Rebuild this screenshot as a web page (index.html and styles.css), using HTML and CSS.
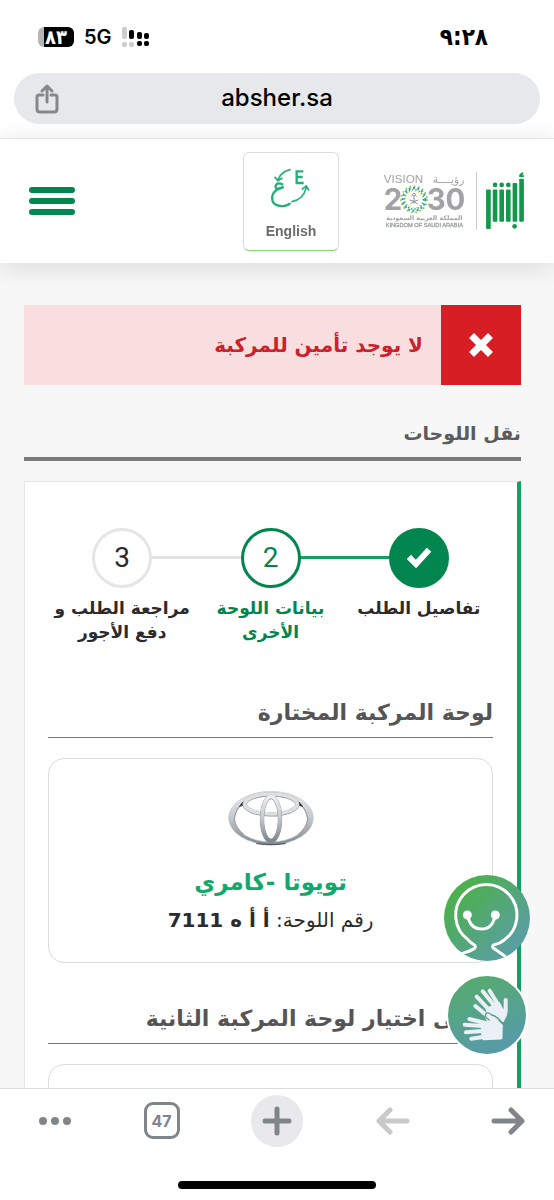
FILE: index.html
```
<!DOCTYPE html>
<html lang="ar" dir="rtl">
  <head>
    <meta charset="utf-8">
    <meta name="viewport" content="width=device-width, initial-scale=1">
    <title>نقل اللوحات</title>
    <link rel="stylesheet" href="styles.css">
  </head>
  <body>
    <div class="status">
      <span class="time">٩:٢٨</span>
      <div class="status-icons">
        <svg class="signal" width="28" height="20" viewBox="0 0 28 20">
          <g fill="#ccc">
            <rect x="0" y="0" width="5" height="12" rx="2"/>
            <rect x="0" y="15" width="5" height="5" rx="2"/>
            <rect x="7" y="15" width="5" height="5" rx="2"/>
          </g>
          <rect x="7" y="3" width="5" height="9" rx="2"/>
          <rect x="15" y="5" width="5" height="7" rx="2"/>
          <rect x="22" y="6" width="5" height="6" rx="2"/>
          <rect x="15" y="14" width="5" height="5" rx="2"/>
          <rect x="22" y="14" width="5" height="5" rx="2"/>
        </svg>
        <span class="network">5G</span>
        <span class="battery">٨٣</span>
      </div>
    </div>

    <div class="address">
      <span class="address-text">absher.sa</span>
      <button class="share" aria-label="مشاركة">
        <svg width="24" height="30" viewBox="0 0 24 30" fill="none" stroke="#85888b" stroke-width="3" stroke-linecap="round" stroke-linejoin="round">
          <path d="M8 11H4q-2 0-2 2v12q0 3 3 3h14q3 0 3-3V13q0-2-2-2h-4M12 18V3M7 7l5-5 5 5"/>
        </svg>
      </button>
    </div>

    <header class="header">
      <svg class="absher" width="40" height="58" viewBox="345 35 120 175" fill="#12984a">
        <rect x="348" y="88" width="14" height="119" rx="3"/>
        <rect x="368" y="88" width="14" height="97" rx="3"/>
        <rect x="388" y="88" width="14" height="97" rx="3"/>
        <rect x="408" y="88" width="14" height="97" rx="3"/>
        <rect x="428" y="68" width="14" height="117" rx="3"/>
        <rect x="448" y="55" width="14" height="130" rx="3"/>
        <circle cx="375" cy="74" r="7"/>
        <circle cx="395" cy="74" r="7"/>
        <circle cx="415" cy="74" r="7"/>
        <circle cx="434" cy="199" r="7"/>
        <path d="M448 50v-7q5-6 12-7v6l-4 3h6v5z"/>
      </svg>
      <svg class="vision" width="84" height="58" viewBox="40 40 252 174" direction="ltr" fill="#a1a3a6">
        <text class="v-word" x="42" y="74">VISION</text>
        <text class="v-word-ar" x="284" y="72">رؤيــــة</text>
        <text class="v-num" x="42" y="153">2</text>
        <text class="v-num" x="171" y="153">30</text>
        <g fill="none">
          <circle cx="133" cy="122" r="39" stroke="#8cc63f" stroke-width="5" stroke-dasharray="5 8"/>
          <circle cx="133" cy="122" r="34" stroke="#1aa6b7" stroke-width="6" stroke-dasharray="6 7"/>
          <circle cx="133" cy="122" r="29" stroke="#1f9d55" stroke-width="4" stroke-dasharray="4 6"/>
          <circle cx="133" cy="122" r="25" stroke="#d9d94a" stroke-width="4" stroke-dasharray="3 7"/>
          <path d="M133 134v-20M125 113q4-7 8 0 4-7 8 0M127 108q6-8 12 0M120 124q12 2 24 12M146 124q-12 2-24 12" stroke="#8b9095" stroke-width="3"/>
        </g>
        <text class="v-small" x="164" y="184">المملكة العربية السعودية</text>
        <text class="v-small-en" x="164" y="205">KINGDOM OF SAUDI ARABIA</text>
      </svg>
      <button class="lang" lang="en">
        <svg width="42" height="42" viewBox="0 0 126 126" fill="none" stroke="#25b07a" stroke-width="5" stroke-linecap="round">
          <path d="M60 8Q34 14 25 36M15 31l9 10 12-7"/>
          <path d="M66 104q34-8 42-40M97 66l12-9 7 12"/>
          <path d="M37 52q-16-7-20 4-2 10 10 10l14-6q-29 6-34 27-4 27 24 30 19 2 28-7" stroke-width="7"/>
          <path d="M100 13H80v35h21M80 30h18" stroke-width="7" stroke-linecap="butt"/>
        </svg>
        English
      </button>
      <button class="burger" aria-label="القائمة"><i></i><i></i><i></i></button>
    </header>

    <main class="content">
      <div class="alert" role="alert">
        <div class="alert-icon">
          <svg width="24" height="24" viewBox="0 0 24 24" stroke="#fff" stroke-width="7" stroke-linecap="square"><path d="M5 5l14 14M19 5L5 19"/></svg>
        </div>
        <p class="alert-text">لا يوجد تأمين للمركبة</p>
      </div>

      <h1 class="title">نقل اللوحات</h1>

      <section class="card">
        <ol class="steps">
          <li class="step done">
            <span class="dot"><svg width="26" height="22" viewBox="0 0 26 22" fill="none" stroke="#fff" stroke-width="6" stroke-linecap="square"><path d="M5 12l5 5L21 5"/></svg></span>
            <span class="step-label">تفاصيل الطلب</span>
          </li>
          <li class="step current">
            <span class="dot">2</span>
            <span class="step-label">بيانات اللوحة الأخرى</span>
          </li>
          <li class="step">
            <span class="dot">3</span>
            <span class="step-label">مراجعة الطلب و دفع الأجور</span>
          </li>
        </ol>

        <h2 class="subtitle">لوحة المركبة المختارة</h2>
        <div class="vehicle">
          <svg width="86" height="56" viewBox="0 0 258 168" fill="none">
            <defs>
              <linearGradient id="metal" x1="0" y1="0" x2="0" y2="1">
                <stop offset="0" stop-color="#eceef0"/>
                <stop offset=".5" stop-color="#c3c8cc"/>
                <stop offset="1" stop-color="#80868c"/>
              </linearGradient>
            </defs>
            <path fill="url(#metal)" fill-rule="evenodd" stroke="#c0c4c8" stroke-width="2" d="M2 84a127 80 0 1 0 254 0 127 80 0 1 0-254 0zm17 3a110 69 0 1 1 220 0 110 69 0 1 1-220 0z"/>
            <path d="M41 42Q22 60 19 88q4 26 28 45M217 42q19 18 22 46-4 26-28 45" stroke="#8b9197" stroke-width="3"/>
            <path d="M35 49l9-12v9zM223 49l-9-12v9z" fill="#303538" stroke="#303538" stroke-width="3"/>
            <ellipse cx="129" cy="43" rx="79" ry="30" stroke="#8d9399" stroke-width="13"/>
            <ellipse cx="129" cy="42" rx="79" ry="30" stroke="#dde0e3" stroke-width="11"/>
            <ellipse cx="129" cy="87" rx="27" ry="66" stroke="#8c9298" stroke-width="13"/>
            <ellipse cx="129" cy="86" rx="27" ry="66" stroke="url(#metal)" stroke-width="11"/>
            <path d="M85 160q44 8 88 0" stroke="#555b60" stroke-width="4"/>
          </svg>
          <strong class="vehicle-name">تويوتا -كامري</strong>
          <p class="plate">رقم اللوحة: <b>أ أ ه 7111</b></p>
        </div>

        <h2 class="subtitle">يرجى اختيار لوحة المركبة الثانية</h2>
        <div class="vehicle"></div>
      </section>
    </main>

    <div class="floating">
      <button class="float-btn assistant" aria-label="المساعد">
        <svg width="86" height="86" viewBox="0 0 258 258" fill="none" stroke="#fff" stroke-width="9" stroke-linecap="round" stroke-linejoin="round">
          <path d="M55 235q24-6 37-15 5-5-2-11-10-6-18-15A92 92 0 1 1 182 194q-14 12-32 15-8 5-2 10l34 24"/>
          <path d="M71 122q8 40 41 40 34 0 41-40"/>
          <circle cx="70" cy="120" r="9" fill="#fff"/>
          <circle cx="154" cy="120" r="9" fill="#fff"/>
        </svg>
      </button>
      <button class="float-btn sign" aria-label="لغة الإشارة">
        <svg width="78" height="78" viewBox="0 0 234 234" fill="none" stroke="#ebf0f7" stroke-width="12" stroke-linecap="round" stroke-linejoin="round">
          <path d="M86 62l34 36M104 46l34 42M125 44l28 46M82 90l34 28M173 72v34"/>
          <path d="M118 100l34-18 15 28 6-14v20l-9 18-24-10-20-14z" fill="#ebf0f7" stroke-width="9"/>
          <path d="M64 129l48 12M50 146l54 4M54 169l50-4M70 188l40-6"/>
          <path d="M106 142l18-2-8-16q2-8 10-4l34 28-1 38-52 2-5-24z" fill="#ebf0f7" stroke-width="9"/>
          <path d="M124 132q-16-10-11-18 6-8 18 3 18 4 33 26" stroke="#539f87" stroke-width="4"/>
        </svg>
      </button>
    </div>

    <nav class="toolbar">
      <button class="tool" aria-label="التالي">
        <svg width="34" height="30" viewBox="0 0 34 30"><path d="M3 15h27M20 4l11 11-11 11"/></svg>
      </button>
      <button class="tool" aria-label="السابق" disabled>
        <svg width="34" height="30" viewBox="0 0 34 30"><path d="M31 15H4M14 4L3 15l11 11"/></svg>
      </button>
      <button class="tool new-tab" aria-label="علامة تبويب جديدة">
        <svg width="30" height="30" viewBox="0 0 30 30"><path d="M15 3v24M3 15h24"/></svg>
      </button>
      <button class="tool" aria-label="علامات التبويب"><span class="tab-count">47</span></button>
      <button class="tool more" aria-label="المزيد">
        <svg width="34" height="30" viewBox="0 0 34 30"><path d="M5 15h0M17 15h0M29 15h0" stroke-width="8"/></svg>
      </button>
    </nav>
    <div class="home-bar"></div>
  </body>
</html>
```

FILE: styles.css
```
* {
  box-sizing: border-box;
}

html, body {
  margin: 0;
  height: 100%;
}

body {
  display: flex;
  flex-direction: column;
  position: relative;
  overflow: hidden;
  background: #fff;
  color: #2b2b2d;
  font-family: 'DejaVu Sans', sans-serif;
}

button {
  border: none;
  background: none;
  padding: 0;
  margin: 0;
  cursor: pointer;
}

svg {
  display: block;
}

h1, h2, p, ol {
  margin: 0;
  padding: 0;
}

/* phone status bar */
.status {
  display: flex;
  align-items: center;
  justify-content: space-between;
  flex: none;
  height: 73px;
  padding: 0 66px 0 38px;
  color: #000;
}

.time {
  font: bold 24px/32px 'DejaVu Sans Condensed', 'DejaVu Sans', sans-serif;
}

.status-icons {
  display: flex;
  align-items: center;
  gap: 10px;
}

.signal {
  direction: ltr;
}

.network {
  font: 600 20px/24px Inter, sans-serif;
}

.battery {
  width: 36px;
  height: 20px;
  border-radius: 6px;
  background: linear-gradient(to right, #b5b5b5 6px, #000 6px);
  color: #fff;
  font: bold 20px/20px 'DejaVu Sans Condensed', 'DejaVu Sans', sans-serif;
  text-align: center;
}

.address {
  display: flex;
  align-items: center;
  position: relative;
  flex: none;
  height: 51px;
  margin: 0 14px 14px;
  border-radius: 26px;
  background: #e6e8eb;
}

.address-text {
  flex: 1;
  padding-bottom: 2px;
  color: #000;
  font: 500 24px/32px Inter, sans-serif;
  text-align: center;
}

.share {
  position: absolute;
  left: 21px;
}

/* site header */
.header {
  display: flex;
  align-items: center;
  flex: none;
  height: 125px;
  padding: 0 29px;
  border-top: 1px solid #e4e4e6;
  background: #fff;
  box-shadow: 0 4px 24px rgba(0,0,0,0.12);
  z-index: 1;
}

.absher {
  margin-left: 8px;
}

.vision {
  box-sizing: content-box;
  margin-left: 44px;
  padding-right: 9px;
  border-right: 1px solid #c9cacc;
}

.v-word {
  font: 35px 'Liberation Sans', sans-serif;
}

.v-word-ar {
  font: 32px 'DejaVu Sans', sans-serif;
  text-anchor: end;
}

.v-num {
  font: bold 88px Inter, sans-serif;
}

.v-small {
  font: bold 19px 'DejaVu Sans', sans-serif;
  text-anchor: middle;
}

.v-small-en {
  font: 17px 'Liberation Sans', sans-serif;
  stroke: #a1a3a6;
  text-anchor: middle;
}

.lang {
  display: flex;
  flex-direction: column;
  align-items: center;
  justify-content: space-between;
  width: 96px;
  height: 99px;
  padding: 14px 0 9px;
  border: 1px solid #dcdcdc;
  border-bottom: 1px solid #7fdc6c;
  border-radius: 6px;
  color: #6a6b6e;
  font: bold 14px/20px 'Liberation Sans', sans-serif;
}

.burger {
  display: flex;
  flex-direction: column;
  gap: 5px;
  width: 46px;
  margin-right: auto;
}

.burger i {
  height: 6px;
  border-radius: 3px;
  background: #00864e;
}

/* page */
.content {
  flex: 1;
  min-height: 0;
  overflow-y: auto;
  scrollbar-width: none;
  padding: 42px 33px 0 24px;
  background: #f7f7f7;
}

.alert {
  display: flex;
  height: 80px;
  background: #f9dee0;
}

.alert-icon {
  display: flex;
  align-items: center;
  justify-content: center;
  width: 80px;
  background: #d81e25;
}

.alert-text {
  padding-right: 18px;
  color: #cd202b;
  font-size: 20px;
  font-weight: bold;
  line-height: 80px;
}

.title {
  margin-top: 32px;
  padding-bottom: 8px;
  border-bottom: 4px solid #7b7b7b;
  color: #5b5b5d;
  font-size: 19px;
  font-weight: bold;
  line-height: 32px;
}

.card {
  margin-top: 20px;
  padding: 46px 24px 0 23px;
  border-top: 1px solid #e6e6e6;
  border-left: 1px solid #e6e6e6;
  border-right: 4px solid #12a063;
  background: #fff;
}

.steps {
  display: grid;
  grid-template-columns: repeat(3, 1fr);
  list-style: none;
}

.step {
  display: flex;
  flex-direction: column;
  align-items: center;
  position: relative;
}

/* connector to the next circle */
.step:not(:last-child)::before {
  content: '';
  position: absolute;
  top: 28px;
  left: -50%;
  width: 100%;
  height: 3px;
  background: #e4e4e4;
}

.step.done::before {
  background: #12a063;
}

.dot {
  display: flex;
  align-items: center;
  justify-content: center;
  z-index: 1;
  width: 60px;
  height: 60px;
  border: 3px solid #e6e6e6;
  border-radius: 50%;
  background: #fff;
  font: 28px/32px Roboto, sans-serif;
}

.done .dot {
  border-color: #00864e;
  background: #00864e;
}

.current .dot {
  border-color: #00864e;
  color: #00864e;
}

.step-label {
  max-width: 144px;
  margin-top: 8px;
  font-size: 17px;
  font-weight: bold;
  line-height: 24px;
  text-align: center;
}

.current .step-label {
  max-width: 120px;
  color: #00864e;
}

.subtitle {
  margin-top: 53px;
  padding-bottom: 8px;
  border-bottom: 1px solid #777;
  color: #555557;
  font-size: 22px;
  font-weight: bold;
  line-height: 32px;
}

.vehicle {
  display: flex;
  flex-direction: column;
  align-items: center;
  min-height: 205px;
  margin-top: 20px;
  padding-top: 31px;
  border: 1px solid #dcdcde;
  border-radius: 16px;
}

.vehicle + .subtitle {
  margin-top: 40px;
}

.vehicle-name {
  margin-top: 18px;
  color: #12a76b;
  font-size: 23px;
  line-height: 36px;
}

.plate {
  font-size: 20px;
  line-height: 40px;
}

/* help buttons over the page */
.floating {
  display: flex;
  flex-direction: column;
  align-items: center;
  gap: 13px;
  position: absolute;
  right: 24px;
  bottom: 144px;
  z-index: 2;
}

.float-btn {
  border-radius: 50%;
}

.assistant {
  background: linear-gradient(135deg, #4caf50 20%, #5c9cab 90%);
}

.sign {
  width: 82px;
  height: 82px;
  border: 2px solid #fff;
  background: linear-gradient(160deg, #55ab70 10%, #5799ac 90%);
}

/* browser toolbar */
.toolbar {
  display: flex;
  align-items: center;
  justify-content: space-between;
  flex: none;
  height: 64px;
  padding: 0 20px;
  border-top: 1px solid #dcdcde;
  background: #fff;
  z-index: 1;
}

.tool {
  display: flex;
  align-items: center;
  justify-content: center;
  width: 52px;
  height: 52px;
}

.tool svg {
  fill: none;
  stroke: #80858a;
  stroke-width: 5;
  stroke-linecap: round;
  stroke-linejoin: round;
}

.tool:disabled svg {
  stroke: #c8c9cb;
}

.more {
  justify-content: flex-start;
}

.new-tab {
  border-radius: 50%;
  background: #e8e8ed;
}

.tab-count {
  width: 36px;
  height: 37px;
  border: 3px solid #80858a;
  border-radius: 9px;
  color: #80858a;
  font: bold 16px/32px Inter, sans-serif;
}

.home-bar {
  flex: none;
  width: 198px;
  height: 8px;
  margin: 29px auto 11px;
  border-radius: 4px;
  background: #000;
}
```
